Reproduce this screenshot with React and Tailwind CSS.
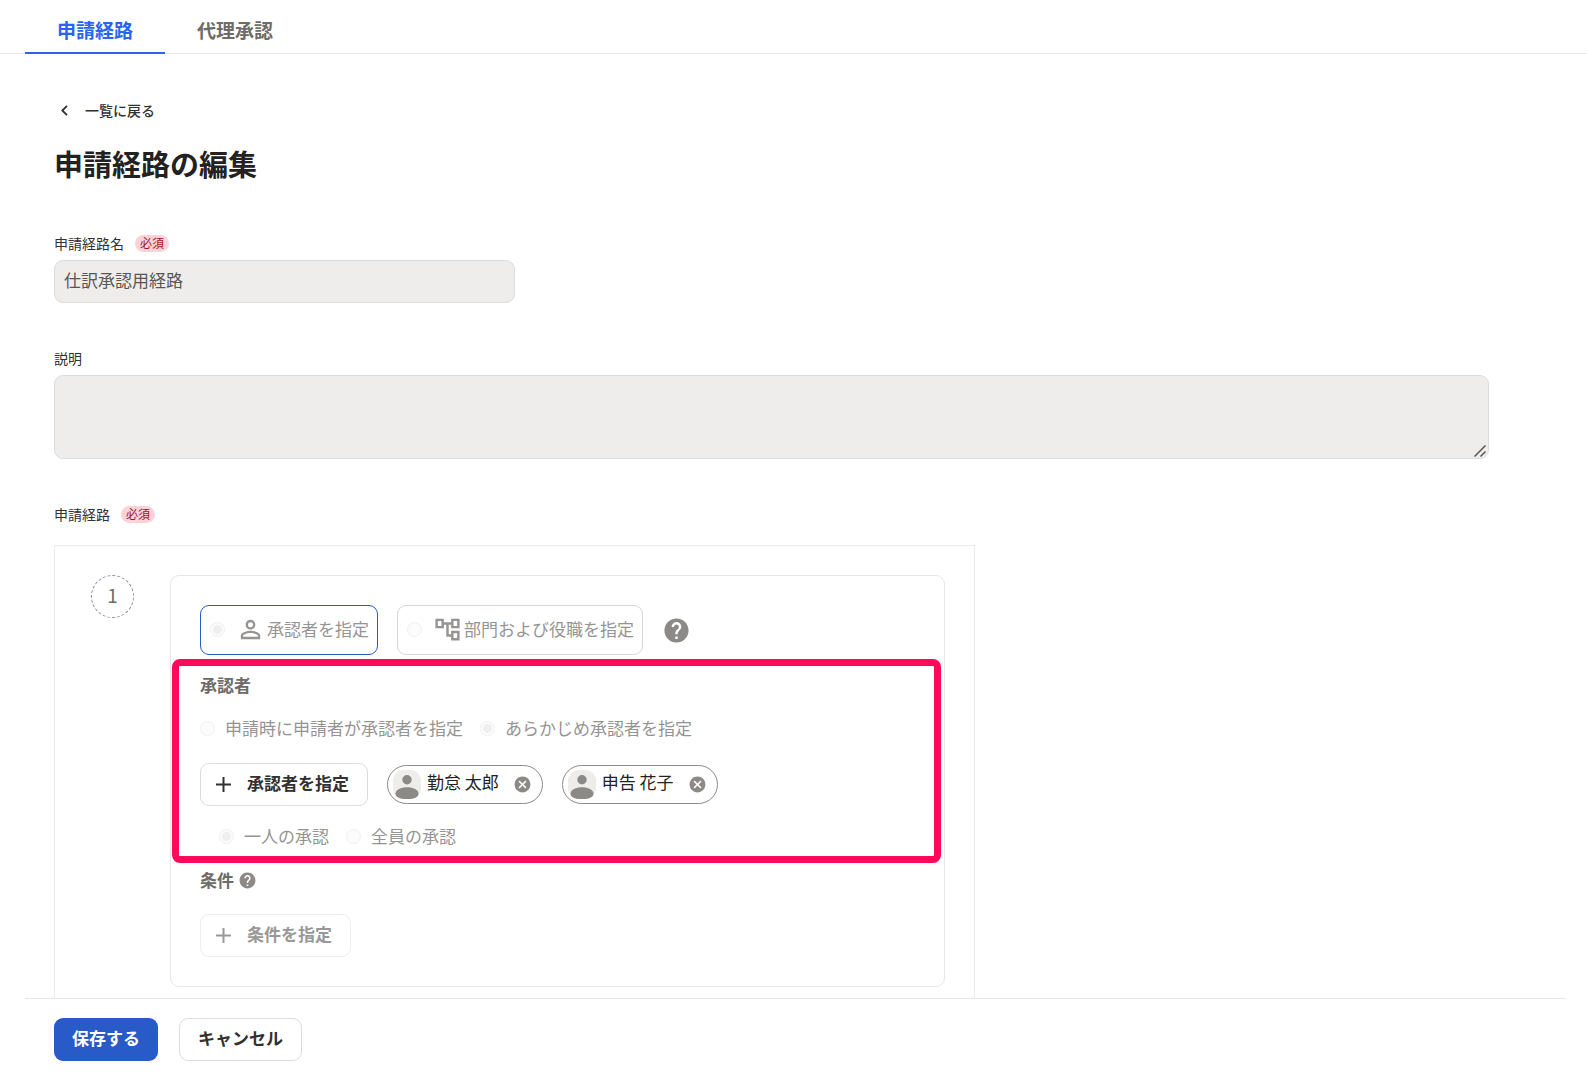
import { MdCancel, MdHelp, MdOutlineAccountTree, MdPersonOutline } from 'react-icons/md';

const approvers = ['勤怠 太郎', '申告 花子'];

const PlusIcon = () => (
    <svg viewBox="0 0 15 15" className="h-[15px] w-[15px]" fill="none" stroke="currentColor" strokeWidth="2" aria-hidden="true">
        <path d="M7.5 0v15M0 7.5h15" />
    </svg>
);

const AvatarIcon = () => (
    <svg viewBox="0 0 28 29" className="h-[29px] w-7 shrink-0" aria-hidden="true">
        <rect width="28" height="29" rx="11" fill="#eeedeb" />
        <circle cx="14" cy="9.7" r="4.7" fill="#8c8a87" />
        <path d="M2.5 23.5c0-3.6 5.4-6.3 11.5-6.3s11.500 2.700 11.500 6.300c0 3.600-3.500 5.500-11.500 5.500s-11.500-1.900-11.500-5.500z" fill="#8c8a87" />
    </svg>
);

const RequiredBadge = () => (
    <span className="flex h-[17px] items-center rounded-full bg-[#fad2d7] px-[5px] text-xs text-[#a51428]">必須</span>
);

const RadioInput = ({ name, checked }) => (
    <input
        type="radio"
        name={name}
        defaultChecked={checked}
        disabled
        className="h-[15px] w-[15px] shrink-0 appearance-none rounded-full border border-[#f0f0f0] bg-[#fcfcfc] p-0.5 before:block before:h-full before:w-full before:rounded-full checked:before:bg-[#efefef]"
    />
);

const Radio = ({ name, checked, children }) => (
    <label className="flex items-center gap-2.5 leading-6 text-[#969492]">
        <RadioInput name={name} checked={checked} />
        {children}
    </label>
);

const Chip = ({ name }) => (
    <span className="flex h-[39px] items-center rounded-full border border-[#8c8a87] pl-[5px] pr-2.5 text-[#232220]">
        <AvatarIcon />
        <span className="ml-1.5 mr-3.5 pb-1.5">{name}</span>
        <button type="button" aria-label={`${name}を削除`} className="text-[#8c8a87]">
            <MdCancel className="h-[19px] w-[19px]" />
        </button>
    </span>
);

const App = () => {
    return (
        <div className="flex h-screen flex-col bg-white font-['Noto_Sans_CJK_JP',sans-serif] text-[17px] text-[#323130]">
            {/* Tabs */}
            <nav className="flex h-[54px] shrink-0 border-b border-[#e6e6e6] pl-[25px] text-[19px] font-bold">
                <a href="#" className="-mb-px flex items-center border-b-2 border-[#2864f0] px-8 pt-2 leading-10 text-[#2864f0]">
                    申請経路
                </a>
                <a href="#" className="-mb-px flex items-center border-b-2 border-transparent px-8 pt-2 leading-10 text-[#6e6b68]">
                    代理承認
                </a>
            </nav>

            <main className="min-h-0 flex-1 overflow-hidden pl-[54px] pr-[98px] pt-[46px]">
                <a href="#" className="flex w-fit items-center gap-[17px] pl-[7px] text-sm leading-5 font-medium">
                    <svg viewBox="0 0 7 11" className="h-[11px] w-[7px]" fill="none" stroke="currentColor" strokeWidth="1.8" aria-hidden="true">
                        <path d="M6 .8 1.300 5.500 6 10.200" />
                    </svg>
                    一覧に戻る
                </a>
                <h1 className="mt-[23px] text-[29px] leading-10 font-bold text-[#232220]">申請経路の編集</h1>

                {/* Name */}
                <div className="mt-[50px] flex items-center gap-[11px] text-sm leading-5">
                    <label htmlFor="route-name">申請経路名</label>
                    <RequiredBadge />
                </div>
                <input
                    id="route-name"
                    type="text"
                    disabled
                    defaultValue="仕訳承認用経路"
                    className="mt-[7px] block h-[43px] w-full max-w-[461px] rounded-[9px] border border-[#dcdcdc] bg-[#eeedeb] px-[9px] pb-1 text-[#595755]"
                />

                {/* Description */}
                <label htmlFor="route-note" className="mt-[45px] block text-sm leading-5">
                    説明
                </label>
                <div className="relative mt-[7px]">
                    <textarea
                        id="route-note"
                        disabled
                        className="block h-[84px] w-full resize-none rounded-[9px] border border-[#dcdcdc] bg-[#eeedeb] px-[9px] py-2"
                    />
                    <svg viewBox="0 0 12 12" className="absolute right-[3px] bottom-0.5 h-3 w-3" stroke="#555" strokeWidth="1.5" aria-hidden="true">
                        <path d="M.5 11.500 11.500.5M6.500 11.500l5-5" />
                    </svg>
                </div>

                {/* Route */}
                <div className="mt-[45px] flex items-center gap-[11px] text-sm leading-5">
                    <h2>申請経路</h2>
                    <RequiredBadge />
                </div>
                <section className="mt-[21px] flex max-w-[921px] items-start gap-9 border border-[#ebebeb] pt-[29px] pr-[29px] pb-20 pl-9">
                    <div className="flex h-[43px] w-[43px] shrink-0 items-center justify-center rounded-full border border-dashed border-[#8c8a87] pb-0.5 text-[19px] text-[#6e6b68]">
                        1
                    </div>

                    <div className="min-w-0 flex-1 rounded-[9px] border border-[#e6e6e6] p-[29px]">
                        <div className="flex items-center">
                            <label className="flex h-[50px] items-center rounded-[9px] border border-[#285ac8] pr-2 pb-0.5 pl-[9px] text-[#969492]">
                                <RadioInput name="approver-kind" checked />
                                <MdPersonOutline className="mr-0.5 ml-[11px] h-[29px] w-[29px]" />
                                承認者を指定
                            </label>
                            <label className="ml-[19px] flex h-[50px] items-center rounded-[9px] border border-[#d7d7d7] pr-2 pb-0.5 pl-[9px] text-[#969492]">
                                <RadioInput name="approver-kind" />
                                <MdOutlineAccountTree className="mr-0.5 ml-[11px] h-[29px] w-[29px]" />
                                部門および役職を指定
                            </label>
                            <button type="button" aria-label="ヘルプ" className="ml-[19px] text-[#8c8a87]">
                                <MdHelp className="h-[29px] w-[29px]" />
                            </button>
                        </div>

                        <div className="relative mt-[18px]">
                            <div className="pointer-events-none absolute -top-3.5 -right-[26px] -bottom-[15px] -left-7 rounded-[8px] border-[7px] border-[#ff0a5a]" />
                            <h3 className="leading-6 font-bold text-[#6e6b68]">承認者</h3>
                            <div className="mt-[19px] flex items-center gap-[17px]">
                                <Radio name="timing">申請時に申請者が承認者を指定</Radio>
                                <Radio name="timing" checked>あらかじめ承認者を指定</Radio>
                            </div>
                            <div className="mt-[23px] flex items-center gap-[19px]">
                                <button
                                    type="button"
                                    className="flex h-[43px] items-center gap-4 rounded-[9px] border border-[#dcdcdc] pr-[18px] pl-[15px] font-bold"
                                >
                                    <PlusIcon />
                                    <span className="pb-1">承認者を指定</span>
                                </button>
                                {approvers.map((name) => (
                                    <Chip key={name} name={name} />
                                ))}
                            </div>
                            <div className="mt-[18px] flex items-center gap-[17px] pl-[19px]">
                                <Radio name="count" checked>一人の承認</Radio>
                                <Radio name="count">全員の承認</Radio>
                            </div>
                        </div>

                        <div className="mt-5 flex items-center gap-1">
                            <h3 className="leading-6 font-bold text-[#6e6b68]">条件</h3>
                            <button type="button" aria-label="条件のヘルプ" className="text-[#8c8a87]">
                                <MdHelp className="h-[19px] w-[19px]" />
                            </button>
                        </div>
                        <button
                            type="button"
                            disabled
                            className="mt-[22px] flex h-[43px] items-center gap-4 rounded-[9px] border border-[#ededed] pr-[18px] pl-[15px] font-bold text-[#989898]"
                        >
                            <PlusIcon />
                            <span className="pb-1">条件を指定</span>
                        </button>
                    </div>
                </section>
            </main>

            {/* Actions */}
            <footer className="mr-[21px] ml-[25px] flex shrink-0 gap-[21px] border-t border-[#e6e6e6] pt-[19px] pb-[19px] pl-[29px] font-bold">
                <button type="button" className="h-[43px] rounded-[9px] bg-[#285ac8] px-[18px] pb-1 text-white">
                    保存する
                </button>
                <button type="button" className="h-[43px] rounded-[9px] border border-[#dcdcdc] px-[18px] pb-1">
                    キャンセル
                </button>
            </footer>
        </div>
    );
};

export default App;
